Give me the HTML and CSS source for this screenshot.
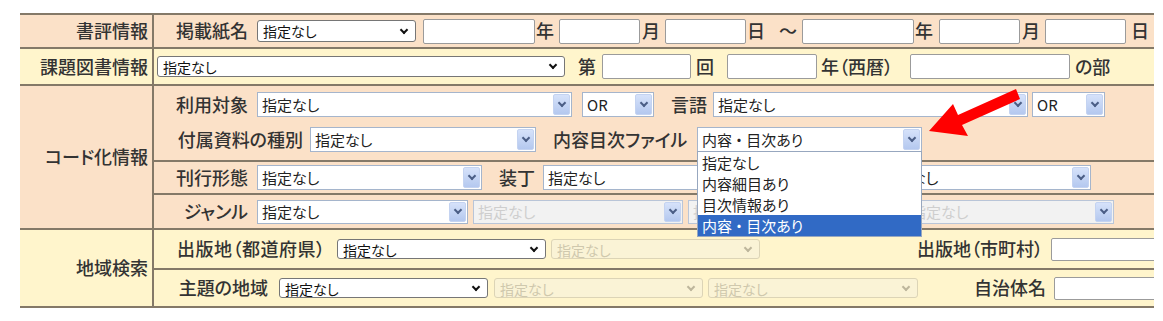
FILE: index.html
```html
<!DOCTYPE html>
<html lang="ja">
<head>
    <meta charset="UTF-8">
    <meta name="viewport" content="width=device-width, initial-scale=1.0">
    <title>詳細検索</title>
    <link rel="stylesheet" href="styles.css">
</head>
<body>
    <div class="search-form">
        <div class="sec peach">
            <div class="head">書評情報</div>
            <div class="body">
                <div class="cell h32">
                    <div class="line">
                        <span class="lbl">掲載紙名</span>
                        <span class="sel cl h22 w159 ml9"><select><option>指定なし</option></select></span>
                        <input type="text" class="w112 ml7">
                        <span class="ml1">年</span>
                        <input type="text" class="w81 ml5">
                        <span class="ml2">月</span>
                        <input type="text" class="w81 ml5">
                        <span class="ml1">日</span>
                        <span class="w18 ml14">〜</span>
                        <input type="text" class="w112 ml5">
                        <span class="ml1">年</span>
                        <input type="text" class="w81 ml6">
                        <span class="ml2">月</span>
                        <input type="text" class="w81 ml5">
                        <span class="ml5">日</span>
                    </div>
                </div>
            </div>
        </div>

        <div class="sec cream">
            <div class="head">課題図書情報</div>
            <div class="body">
                <div class="cell h35">
                    <div class="line tight">
                        <span class="sel cl h21 w408"><select><option>指定なし</option></select></span>
                        <span class="ml13">第</span>
                        <input type="text" class="w89 ml6">
                        <span class="ml5">回</span>
                        <input type="text" class="w90 ml13">
                        <span class="w89 ml4">年（西暦）</span>
                        <input type="text" class="w160">
                        <span class="ml5">の部</span>
                    </div>
                </div>
            </div>
        </div>

        <div class="sec peach">
            <div class="head">コード化情報</div>
            <div class="body">
                <div class="cell h74 top">
                    <div class="line">
                        <span class="lbl">利用対象</span>
                        <span class="sel xp w315 ml9"><select><option>指定なし</option></select><b class="btn"></b></span>
                        <span class="sel xp w72 ml10"><select><option>OR</option></select><b class="btn"></b></span>
                        <span class="ml17">言語</span>
                        <span class="sel xp w315 ml6"><select><option>指定なし</option></select><b class="btn"></b></span>
                        <span class="sel xp w73 ml4"><select><option>OR</option></select><b class="btn"></b></span>
                    </div>
                    <div class="line">
                        <span class="lbl w128">付属資料の種別</span>
                        <span class="sel xp w226 ml7"><select><option>指定なし</option></select><b class="btn"></b></span>
                        <span class="lbl w134 ml17">内容目次ファイル</span>
                        <span class="sel xp w225 ml10 has-list">
                            <select><option>内容 ・ 目次あり</option></select><b class="btn"></b>
                            <ul class="list">
                                <li>指定なし</li>
                                <li>内容細目あり</li>
                                <li>目次情報あり</li>
                                <li class="on">内容 ・ 目次あり</li>
                            </ul>
                        </span>
                    </div>
                </div>
                <div class="cell h33">
                    <div class="line">
                        <span class="lbl">刊行形態</span>
                        <span class="sel xp w225 ml9"><select><option>指定なし</option></select><b class="btn"></b></span>
                        <span class="ml17">装丁</span>
                        <span class="sel xp w250 ml8"><select><option>指定なし</option></select><b class="btn"></b></span>
                        <span class="sel xp w215 ml83"><select><option>指定なし</option></select><b class="btn"></b></span>
                    </div>
                </div>
                <div class="cell h35">
                    <div class="line">
                        <span class="lbl">ジャンル</span>
                        <span class="sel xp w211 ml9 h24"><select><option>指定なし</option></select><b class="btn"></b></span>
                        <span class="sel xp off w210 ml5 h24"><select disabled><option>指定なし</option></select><b class="btn"></b></span>
                        <span class="sel xp off w214 ml5 h24"><select disabled><option>指定なし</option></select><b class="btn"></b></span>
                        <span class="sel xp off w208 ml4 h24"><select disabled><option>指定なし</option></select><b class="btn"></b></span>
                    </div>
                </div>
            </div>
        </div>

        <div class="sec cream">
            <div class="head">地域検索</div>
            <div class="body">
                <div class="cell h38">
                    <div class="line">
                        <span class="lbl w152 pref">出版地（都道府県）</span>
                        <span class="sel cl w209 ml10"><select><option>指定なし</option></select></span>
                        <span class="sel cl off w209 ml5"><select disabled><option>指定なし</option></select></span>
                        <span class="lbl w128 ml155">出版地（市町村）</span>
                        <input type="text" class="w150 h23 ml8">
                    </div>
                </div>
                <div class="cell h38">
                    <div class="line">
                        <span class="lbl w93">主題の地域</span>
                        <span class="sel cl w209 ml11"><select><option>指定なし</option></select></span>
                        <span class="sel cl off w209 ml6"><select disabled><option>指定なし</option></select></span>
                        <span class="sel cl off w210 ml5"><select disabled><option>指定なし</option></select></span>
                        <span class="lbl w70 ml55">自治体名</span>
                        <input type="text" class="w150 h23 ml8">
                    </div>
                </div>
            </div>
        </div>
    </div>

    <svg class="mark" width="1163" height="321" viewBox="0 0 1163 321">
        <polygon points="929,131 953,104 958,115 1016,89 1020,99 962,125 968,136" fill="#ff0000"/>
    </svg>
</body>
</html>
```

FILE: styles.css
```css
* {
    box-sizing: border-box;
}
body {
    margin: 0;
    font-family: "Noto Sans CJK JP", "Noto Sans", sans-serif;
    color: #333;
    background: #fff;
}
.search-form {
    margin: 13px 0 0 20px;
    width: 1134px;
    overflow: hidden;
    border-top: 2px solid #847968;
    font-size: 18px;
    font-weight: 500;
    font-feature-settings: "palt";
    line-height: 1.2;
}
.sec {
    display: flex;
    border-bottom: 2px solid #847968;
}
.peach {
    background: #fbe1c8;
}
.cream {
    background: #fff5cc;
}
.head {
    flex: none;
    width: 134px;
    padding-right: 4px;
    border-right: 2px solid #847968;
    display: flex;
    align-items: center;
    justify-content: flex-end;
}
.body {
    flex: 1;
    min-width: 0;
}
.cell {
    display: flex;
    flex-direction: column;
    justify-content: center;
    gap: 10px;
}
.cell + .cell {
    border-top: 2px solid #847968;
}
.cell.top {
    justify-content: flex-start;
    padding-top: 6px;
}
.h32 { height: 32px; }
.h33 { height: 33px; }
.h35 { height: 35px; }
.h38 { height: 38px; }
.h74 { height: 74px; }

.line {
    display: flex;
    align-items: center;
    padding-left: 21px;
    white-space: nowrap;
}
.line.tight {
    padding-left: 3px;
}
.line > * {
    flex: none;
}
.lbl {
    display: inline-block;
    min-width: 73px;
    text-align: right;
}
.pref {
    text-align: left;
    padding-left: 2px;
    letter-spacing: 0.5px;
}

/* text boxes */
input[type="text"] {
    height: 25px;
    padding: 0 3px;
    border: 1px solid #9b9b9b;
    border-radius: 2px;
    background: #fff;
    font: 14px "Noto Sans CJK JP", sans-serif;
}
input.h23 {
    height: 23px;
}

/* select boxes */
.sel {
    display: inline-flex;
    align-items: center;
    background: #fff;
}
.sel select {
    appearance: none;
    flex: 1;
    min-width: 0;
    height: 100%;
    border: 0;
    outline: none;
    background: transparent;
    font-family: "Noto Sans CJK JP", "Noto Sans", sans-serif;
    font-weight: 400;
    font-feature-settings: "palt";
}
.cl {
    height: 20px;
    border: 1px solid #767676;
    border-radius: 3px;
}
.cl select {
    padding-left: 5px;
    font-size: 14px;
    color: #111;
}
.cl::after {
    content: "";
    flex: none;
    width: 4px;
    height: 4px;
    margin: 0 8px 3px 0;
    border-right: 2px solid #111;
    border-bottom: 2px solid #111;
    transform: rotate(45deg);
}
.cl.off {
    background: #faf3d6;
    border-color: #dcd4b6;
}
.cl.off select {
    color: #bdb69c;
}
.cl.off::after {
    border-color: #bdb69c;
}
.h21 { height: 21px; }
.h22 { height: 22px; }
.h24 { height: 24px; }

.xp {
    height: 25px;
    border: 1px solid #a5b5cc;
}
.xp.h24 {
    height: 24px;
}
.xp select {
    padding-left: 4px;
    font-size: 15px;
    color: #222;
}
.xp .btn {
    flex: none;
    align-self: stretch;
    width: 17px;
    margin: 1px;
    border: 1px solid #c4d3f1;
    border-radius: 2px;
    background: linear-gradient(#d6e2fa, #b4c8ef);
    display: flex;
    align-items: center;
    justify-content: center;
}
.xp .btn::after {
    content: "";
    width: 4px;
    height: 4px;
    margin-bottom: 3px;
    border-right: 2px solid #4b5e86;
    border-bottom: 2px solid #4b5e86;
    transform: rotate(45deg);
}
.xp.off {
    background: #f2f2f2;
    border-color: #b9c5d8;
}
.xp.off select {
    color: #c0c0c0;
}

/* open list */
.has-list {
    position: relative;
}
.list {
    position: absolute;
    top: 23px;
    left: -1px;
    z-index: 1;
    width: 225px;
    margin: 0;
    padding: 0;
    list-style: none;
    background: #fff;
    border: 1px solid #97a7bf;
    font-size: 15px;
    font-weight: 400;
    color: #222;
}
.list li {
    height: 21px;
    line-height: 21px;
    padding-left: 4px;
}
.list .on {
    background: #316ac5;
    color: #fff;
}

.mark {
    position: absolute;
    top: 0;
    left: 0;
    z-index: 2;
    pointer-events: none;
}

/* widths */
.w18 { width: 18px; text-align: center; }
.w70 { width: 70px; }
.w72 { width: 72px; }
.w73 { width: 73px; }
.w81 { width: 81px; }
.w89 { width: 89px; }
.w90 { width: 90px; }
.w93 { width: 93px; }
.w112 { width: 112px; }
.w128 { width: 128px; }
.w134 { width: 134px; }
.w150 { width: 150px; }
.w152 { width: 152px; }
.w159 { width: 159px; }
.w160 { width: 160px; }
.w208 { width: 208px; }
.w209 { width: 209px; }
.w210 { width: 210px; }
.w211 { width: 211px; }
.w214 { width: 214px; }
.w215 { width: 215px; }
.w225 { width: 225px; }
.w226 { width: 226px; }
.w250 { width: 250px; }
.w315 { width: 315px; }
.w408 { width: 408px; }

/* left margins */
.ml1 { margin-left: 1px; }
.ml2 { margin-left: 2px; }
.ml4 { margin-left: 4px; }
.ml5 { margin-left: 5px; }
.ml6 { margin-left: 6px; }
.ml7 { margin-left: 7px; }
.ml8 { margin-left: 8px; }
.ml9 { margin-left: 9px; }
.ml10 { margin-left: 10px; }
.ml11 { margin-left: 11px; }
.ml13 { margin-left: 13px; }
.ml14 { margin-left: 14px; }
.ml17 { margin-left: 17px; }
.ml55 { margin-left: 55px; }
.ml83 { margin-left: 83px; }
.ml155 { margin-left: 155px; }
```
